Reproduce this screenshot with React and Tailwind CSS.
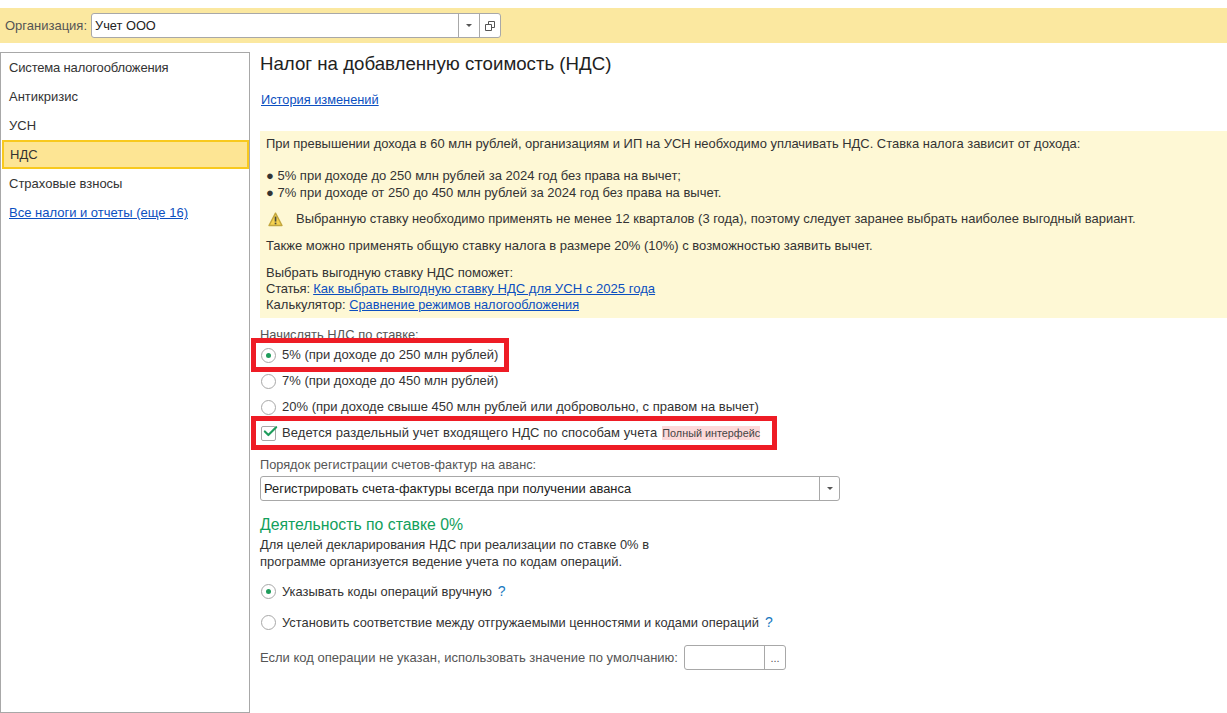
import { Check } from 'lucide-react';

const menu = [
  { name: 'Система налогообложения', cls: 'tracking-[-0.17px]' },
  { name: 'Антикризис', cls: '' },
  { name: 'УСН', cls: '' },
  { name: 'НДС', cls: '' },
  { name: 'Страховые взносы', cls: '' },
];

const Radio = ({ checked }) => (
  <span className="w-[15px] h-[15px] rounded-full border border-[#a8a8a8] bg-white flex items-center justify-center shrink-0">
    {checked && <span className="w-[5px] h-[5px] rounded-full bg-[#1f9d5c]" />}
  </span>
);

const RadioRow = ({ checked, className, children }) => (
  <div className={`flex items-center gap-[6px] pl-[1px] h-[18px] ${className}`}>
    <Radio checked={checked} />
    <span>{children}</span>
  </div>
);

const Arrow = () => <span className="w-0 h-0 border-x-[3px] border-x-transparent border-t-[3px] border-t-[#555]" />;

const Warning = () => (
  <svg width="15" height="15" viewBox="0 0 15 15" className="shrink-0">
    <path d="M7.5 1.2 L14 13.5 H1 Z" fill="#f5d24f" stroke="#c2a63e" strokeWidth="1.4" strokeLinejoin="round" />
    <rect x="6.7" y="4.6" width="1.7" height="5" fill="#4a4a3a" />
    <rect x="6.7" y="10.6" width="1.7" height="1.7" fill="#4a4a3a" />
  </svg>
);

const Lnk = ({ className, children }) => <a className={`text-[#0b4fc0] underline ${className}`}>{children}</a>;

export default function App() {
  return (
    <div className="relative h-[713px] overflow-hidden bg-white pt-2 text-[13px] leading-[16px] text-[#333] font-['Liberation_Sans',Arial,sans-serif]">
      <div className="h-[35px] bg-[#fbe8a0] flex items-center pl-[5px] gap-[4px]">
        <span className="text-[#555]">Организация:</span>
        <div className="w-[410px] h-[25px] rounded-[3px] border border-[#a8a8a8] bg-white flex items-center">
          <span className="flex-1 pl-[3px] text-[#222] text-[12.8px]">Учет ООО</span>
          <div className="w-[21px] h-full border-l border-[#a8a8a8] flex items-center justify-center">
            <Arrow />
          </div>
          <div className="w-[21px] h-full border-l border-[#a8a8a8] flex items-center justify-center">
            <svg width="10" height="10" viewBox="0 0 10 10" fill="none" stroke="#555">
              <path d="M3.5 3V.5h6v6H7" />
              <path d="M.5 3.5h6v6h-6z" />
            </svg>
          </div>
        </div>
      </div>

      <div className="flex mt-[9px] h-[661px]">
        <div className="w-[250px] shrink-0 border border-[#a8a8a8] pl-[1px]">
          {menu.map((item) => (
            <div
              key={item.name}
              className={
                item.name === 'НДС'
                  ? 'h-[29px] flex items-center pl-[6px] bg-[#fde594] border-2 border-[#f8c91e]'
                  : `h-[29px] flex items-center pl-[7px] ${item.cls}`
              }
            >
              {item.name}
            </div>
          ))}
          <div className="h-[29px] flex items-center pl-[7px]">
            <Lnk>Все налоги и отчеты (еще 16)</Lnk>
          </div>
        </div>

        <div className="flex-1 pl-[10px]">
          <h1 className="text-[18.67px] leading-[22px] mt-[1px] text-[#222]">Налог на добавленную стоимость (НДС)</h1>
          <div className="mt-[17px] pl-[1px] h-[16px]">
            <Lnk className="text-[12.8px]">История изменений</Lnk>
          </div>

          <div className="mt-[23px] h-[187px] bg-[#fef8d5] pl-[6px] pt-[5px]">
            <p className="text-[12.94px]">При превышении дохода в 60 млн рублей, организациям и ИП на УСН необходимо уплачивать НДС. Ставка налога зависит от дохода:</p>
            <p className="mt-[16px]">● 5% при доходе до 250 млн рублей за 2024 год без права на вычет;</p>
            <p className="mt-[1px]">● 7% при доходе от 250 до 450 млн рублей за 2024 год без права на вычет.</p>
            <div className="flex items-center gap-[13px] mt-[10px] pl-[2px]">
              <Warning />
              <p className="text-[12.94px]">Выбранную ставку необходимо применять не менее 12 кварталов (3 года), поэтому следует заранее выбрать наиболее выгодный вариант.</p>
            </div>
            <p className="mt-[11px]">Также можно применять общую ставку налога в размере 20% (10%) с возможностью заявить вычет.</p>
            <p className="mt-[11px]">Выбрать выгодную ставку НДС поможет:</p>
            <p><span className="tracking-[-0.25px]">Статья: </span><Lnk className="text-[13.1px]">Как выбрать выгодную ставку НДС для УСН с 2025 года</Lnk></p>
            <p>Калькулятор: <Lnk className="text-[12.72px]">Сравнение режимов налогообложения</Lnk></p>
          </div>

          <div className="mt-[9px] h-[16px] text-[#555] text-[12.9px]">Начислять НДС по ставке:</div>
          <RadioRow checked className="mt-[3px]">5% (при доходе до 250 млн рублей)</RadioRow>
          <RadioRow className="mt-[8px]">7% (при доходе до 450 млн рублей)</RadioRow>
          <RadioRow className="mt-[8px]">20% (при доходе свыше 450 млн рублей или добровольно, с правом на вычет)</RadioRow>
          <div className="flex items-center gap-[6px] pl-[1px] h-[18px] mt-[8px]">
            <span className="relative w-[15px] h-[15px] border border-[#a8a8a8] bg-white rounded-[2px] shrink-0">
              <Check size={17} strokeWidth={3} className="absolute -top-[4px] left-0 text-[#1f9d5c]" />
            </span>
            <span className="tracking-[0.09px]">Ведется раздельный учет входящего НДС по способам учета</span>
            <span className="bg-[#fcd9d9] text-[10.8px] leading-[14px] text-[#444] -ml-[1px]">Полный интерфейс</span>
          </div>

          <div className="mt-[15px] h-[16px] text-[#555] text-[12.75px]">Порядок регистрации счетов-фактур на аванс:</div>
          <div className="mt-[3px] w-[580px] h-[25px] rounded-[3px] border border-[#a8a8a8] flex items-center">
            <span className="flex-1 pl-[3px] text-[#222] text-[12.9px]">Регистрировать счета-фактуры всегда при получении аванса</span>
            <div className="w-[20px] h-full border-l border-[#a8a8a8] flex items-center justify-center">
              <Arrow />
            </div>
          </div>

          <h2 className="mt-[14px] text-[15.8px] leading-[20px] text-[#12a05c]">Деятельность по ставке 0%</h2>
          <p className="mt-[2px] text-[12.9px]">Для целей декларирования НДС при реализации по ставке 0% в</p>
          <p className="mt-[1px]">программе организуется ведение учета по кодам операций.</p>
          <RadioRow checked className="mt-[12px]">
            <span className="text-[12.9px]">Указывать коды операций вручную</span>
            <span className="ml-[6px] text-[14px] text-[#1878c0]">?</span>
          </RadioRow>
          <RadioRow className="mt-[13px]">
            <span className="text-[12.87px]">Установить соответствие между отгружаемыми ценностями и кодами операций</span>
            <span className="ml-[6px] text-[14px] text-[#1878c0]">?</span>
          </RadioRow>
          <div className="flex items-center gap-[6px] mt-[14px] h-[25px]">
            <span className="text-[#555]">Если код операции не указан, использовать значение по умолчанию:</span>
            <div className="w-[102px] h-[25px] rounded-[3px] border border-[#a8a8a8] flex items-center">
              <span className="flex-1" />
              <div className="w-[21px] h-full border-l border-[#a8a8a8] flex items-center justify-center text-[11px] text-[#555]">...</div>
            </div>
          </div>
        </div>
      </div>

      <div className="absolute left-[251px] top-[338px] w-[258px] h-[34px] border-[5px] border-[#ee1c25]" />
      <div className="absolute left-[251px] top-[416px] w-[526px] h-[34px] border-[5px] border-[#ee1c25]" />
    </div>
  );
}
